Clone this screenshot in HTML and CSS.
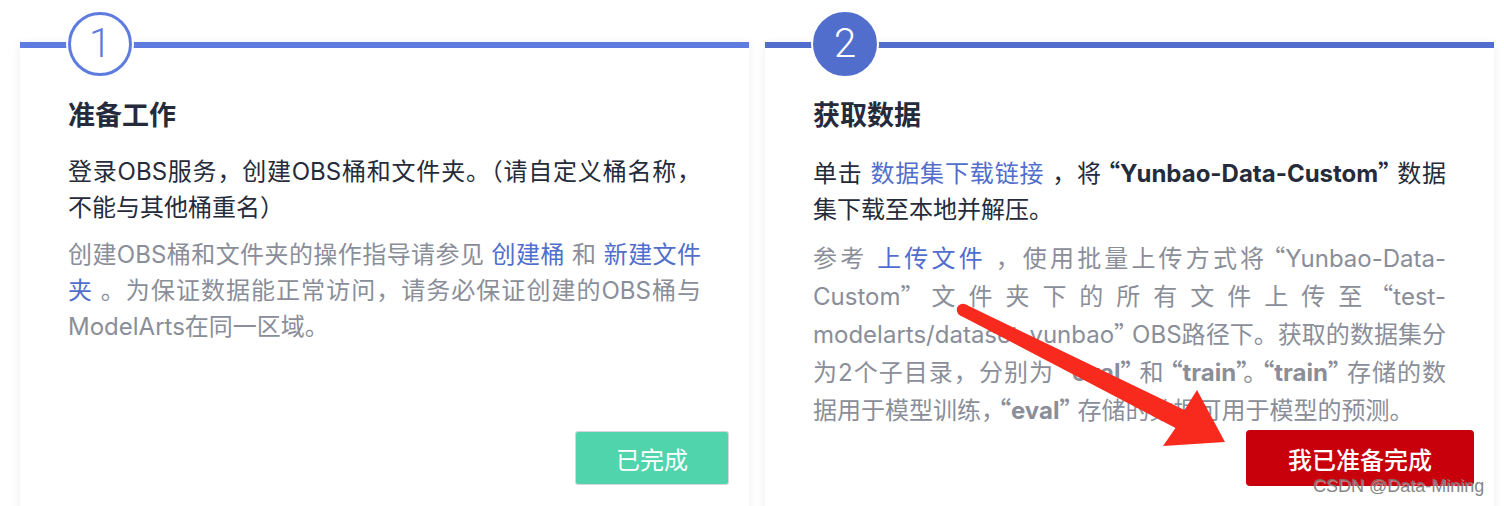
FILE: index.html
```html
<!DOCTYPE html>
<html lang="zh-CN">
<head>
<meta charset="utf-8">
<title>准备工作 / 获取数据</title>
<link rel="stylesheet" href="styles.css">
</head>
<body>
<main class="steps">
  <section class="card card-done">
    <div class="badge">1</div>
    <h2 class="title">准备工作</h2>
    <p class="desc">登录OBS服务，创建OBS桶和文件夹。（请自定义桶名称，不能与其他桶重名）</p>
    <p class="note">创建OBS桶和文件夹的操作指导请参见 <a class="link">创建桶</a> 和 <a class="link">新建文件夹</a> 。为保证数据能正常访问，请务必保证创建的OBS桶与ModelArts在同一区域。</p>
    <div class="actions"><button class="btn btn-done">已完成</button></div>
  </section>
  <section class="card card-active">
    <div class="badge">2</div>
    <h2 class="title">获取数据</h2>
    <p class="desc lines">
      <span class="ln">单击 <a class="link">数据集下载链接</a> ，将<b><span class="q qo">“</span>Yunbao-Data-Custom<span class="q qc">”</span></b>数据</span>
      <span class="ln">集下载至本地并解压。</span>
    </p>
    <p class="note lines">
      <span class="ln">参考 <a class="link">上传文件</a> ，使用批量上传方式将<span class="q qo">“</span>Yunbao-Data-</span>
      <span class="ln">Custom<span class="q qc">”</span>文件夹下的所有文件上传至<span class="q qo">“</span>test-</span>
      <span class="ln">modelarts/dataset-yunbao<span class="q qc">”</span>OBS路径下。获取的数据集分</span>
      <span class="ln">为2个子目录，分别为<b><span class="q qo">“</span>eval<span class="q qc">”</span></b>和<b><span class="q qo">“</span>train<span class="q qc">”</span></b>。<b><span class="q qo">“</span>train<span class="q qc">”</span></b>存储的数</span>
      <span class="ln">据用于模型训练，<b><span class="q qo">“</span>eval<span class="q qc">”</span></b>存储的数据可用于模型的预测。</span>
    </p>
    <div class="actions"><button class="btn btn-primary">我已准备完成</button></div>
  </section>
</main>
<svg class="arrow" viewBox="0 0 1504 506" width="1504" height="506" aria-hidden="true">
  <circle cx="963" cy="310" r="6.2" fill="#f82a1d"/>
  <polygon fill="#f82a1d" points="965.7,304.6 1184.5,410 1197,390 1225,442 1163,446 1175.5,428 960.3,315.4"/>
</svg>
<div class="watermark">CSDN @Data-Mining</div>
</body>
</html>
```

FILE: styles.css
```css
html, body {
  margin: 0;
  padding: 0;
  background: #ffffff;
}

body {
  position: relative;
  width: 1504px;
  height: 506px;
  overflow: hidden;
  font-family: Inter, "Noto Sans CJK SC", sans-serif;
  color: #252b3a;
}

.steps {
  display: flex;
  gap: 16px;
  padding: 42px 10px 0 20px;
}

.card {
  flex: 1;
  position: relative;
  box-sizing: border-box;
  height: 480px;
  background: #ffffff;
  border-top: 6px solid #5e7ce0;
  box-shadow: 0 2px 10px rgba(0, 0, 0, 0.07);
  display: flex;
  flex-direction: column;
  padding: 48px 20px 36px 48px;
}

.card-active {
  border-top-color: #526ecc;
}

.badge {
  position: absolute;
  top: -36px;
  left: 48px;
  box-sizing: border-box;
  width: 64px;
  height: 64px;
  border-radius: 50%;
  border: 3px solid #5e7ce0;
  background: #ffffff;
  box-shadow: 0 0 0 2px #ffffff;
  display: flex;
  align-items: center;
  justify-content: center;
  font-family: Roboto, "Liberation Sans", sans-serif;
  font-weight: 300;
  font-size: 40px;
  line-height: 1;
  color: #5e7ce0;
}

.card-active .badge {
  background: #526ecc;
  border-color: #526ecc;
  color: #ffffff;
}

.title {
  margin: 0 28px 18px 0;
  font-size: 27px;
  line-height: 40px;
  font-weight: 700;
  color: #252b3a;
}

.desc,
.note {
  margin: 0 28px 0 0;
  font-size: 24px;
  line-height: 36px;
  text-align: justify;
}

.desc {
  color: #252b3a;
}

.note {
  margin-top: 11px;
  color: #8a8e99;
}

.note b,
.desc b {
  font-weight: 700;
}

.lines .ln {
  display: block;
  white-space: nowrap;
  text-align: justify;
  text-align-last: justify;
}

.lines .ln:last-child {
  text-align-last: left;
}

.q {
  font-family: "Noto Sans CJK SC", sans-serif;
}

.qo {
  margin-left: -6px;
}

.qc {
  margin-right: -6px;
}

.link {
  color: #526ecc;
  text-decoration: none;
}

.actions {
  margin-top: auto;
  height: 56px;
  flex-shrink: 0;
  display: flex;
  align-items: center;
  justify-content: flex-end;
}

.btn {
  font-family: Inter, "Noto Sans CJK SC", sans-serif;
  font-size: 24px;
  color: #ffffff;
  cursor: pointer;
  padding: 0;
}

.btn-done {
  width: 154px;
  height: 54px;
  background: #50d4ab;
  border: 1px solid #d3d6dc;
  border-radius: 3px;
  font-weight: 400;
}

.btn-primary {
  width: 228px;
  height: 56px;
  background: #c7000b;
  border: none;
  border-radius: 4px;
  font-weight: 500;
}

.arrow {
  position: absolute;
  top: 0;
  left: 0;
  pointer-events: none;
}

.watermark {
  position: absolute;
  left: 1313px;
  top: 476px;
  font-family: "Liberation Sans", Arial, sans-serif;
  font-size: 18px;
  line-height: 21px;
  color: rgba(118, 118, 118, 0.9);
  text-shadow: 1px 1px 1px rgba(255, 255, 255, 0.6);
  white-space: nowrap;
}
```
